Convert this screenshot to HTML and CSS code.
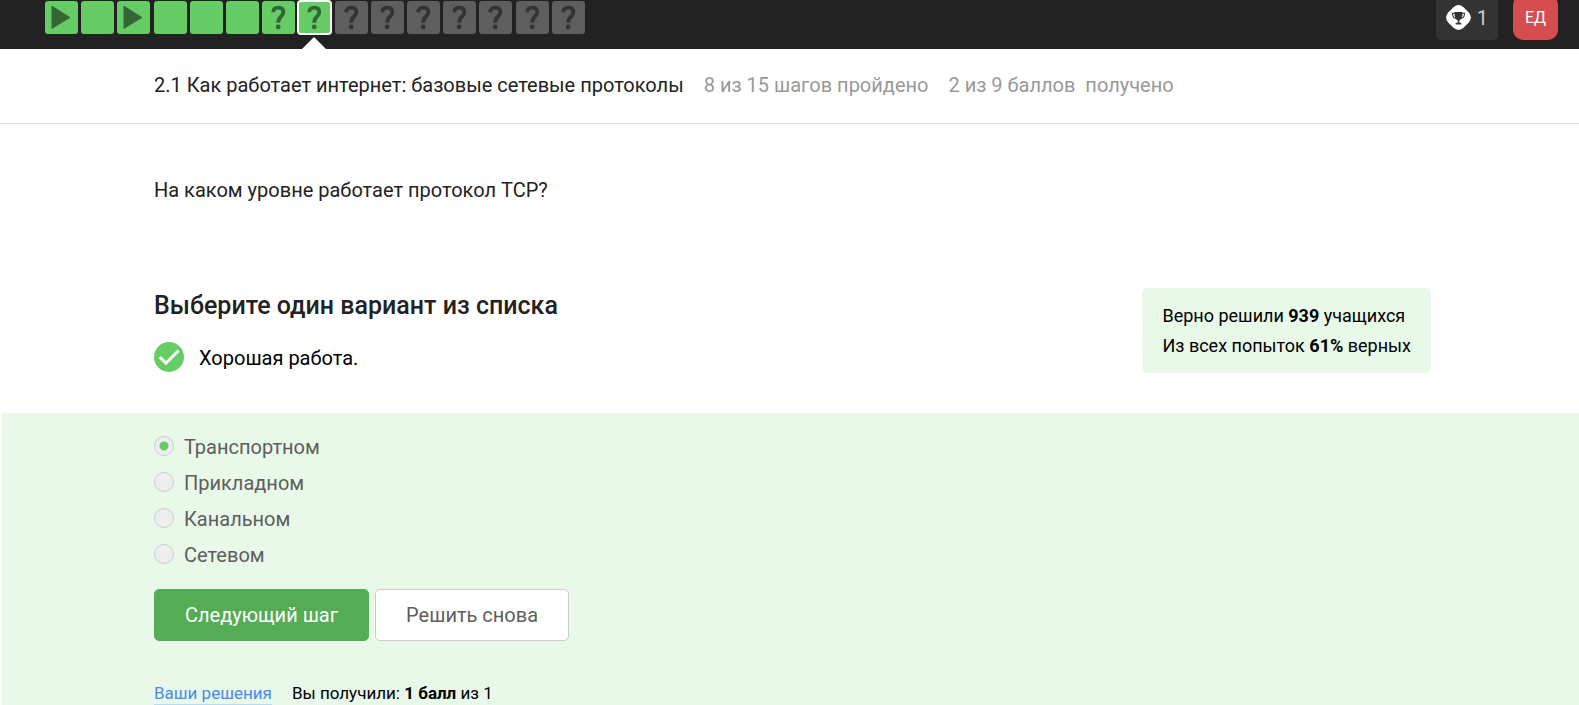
FILE: index.html
```html
<!DOCTYPE html>
<html lang="ru">
<head>
<meta charset="utf-8">
<meta name="viewport" content="width=device-width, initial-scale=1">
<title>Как работает интернет: базовые сетевые протоколы</title>
<link rel="stylesheet" href="styles.css">
</head>
<body>
<svg width="0" height="0" class="sprite" aria-hidden="true">
  <symbol id="play" viewBox="0 0 33 33"><path d="M6.500 5.500Q6.500 4.500 7.500 5L24.500 15.800Q25.500 16.500 24.500 17.200L7.500 27.500Q6.500 28 6.500 27Z"/></symbol>
  <symbol id="question" viewBox="0 0 33 33"><path d="M11.200 11.300C11.200 8.200 13.200 6.600 16.500 6.600C19.800 6.600 21.300 8.200 21.300 11C21.300 13.200 20.500 14.300 18.900 15.700C17 17.400 16.200 18.600 16.200 21.700" fill="none" stroke="currentColor" stroke-width="3.800"/><circle cx="16.200" cy="25.900" r="2.400"/></symbol>
</svg>
<header class="topbar">
  <nav class="steps" aria-label="Шаги урока">
    <a class="step step--done" href="#" aria-label="Шаг 1"><svg><use href="#play"/></svg></a>
    <a class="step step--done" href="#" aria-label="Шаг 2"></a>
    <a class="step step--done" href="#" aria-label="Шаг 3"><svg><use href="#play"/></svg></a>
    <a class="step step--done" href="#" aria-label="Шаг 4"></a>
    <a class="step step--done" href="#" aria-label="Шаг 5"></a>
    <a class="step step--done" href="#" aria-label="Шаг 6"></a>
    <a class="step step--done" href="#" aria-label="Шаг 7"><svg><use href="#question"/></svg></a>
    <a class="step step--done step--active" href="#" aria-label="Шаг 8" aria-current="step"><svg><use href="#question"/></svg></a>
    <a class="step" href="#" aria-label="Шаг 9"><svg><use href="#question"/></svg></a>
    <a class="step" href="#" aria-label="Шаг 10"><svg><use href="#question"/></svg></a>
    <a class="step" href="#" aria-label="Шаг 11"><svg><use href="#question"/></svg></a>
    <a class="step" href="#" aria-label="Шаг 12"><svg><use href="#question"/></svg></a>
    <a class="step" href="#" aria-label="Шаг 13"><svg><use href="#question"/></svg></a>
    <a class="step" href="#" aria-label="Шаг 14"><svg><use href="#question"/></svg></a>
    <a class="step" href="#" aria-label="Шаг 15"><svg><use href="#question"/></svg></a>
  </nav>
  <div class="user">
    <button class="awards" type="button">
      <svg class="awards__icon" viewBox="0 0 25 25" aria-hidden="true">
        <path d="M7.500 2.200Q12.500-2 17.500 2.200L22.800 7.500Q27 12.500 22.800 17.500L17.500 22.800Q12.500 27 7.500 22.800L2.200 17.500Q-2 12.500 2.200 7.500Z" fill="#fff"/>
        <path d="M8.500 7h8c0 5-.8 7.500-3.200 8.300v2.500h2v1.600H9.700v-1.600h2v-2.500C9.300 14.500 8.500 12 8.500 7Z" fill="#333"/>
        <path d="M9 8.200H6.500c0 3 1 4.700 3.300 5.300M16 8.200h2.500c0 3-1 4.700-3.300 5.300" fill="none" stroke="#333" stroke-width="1.100"/>
      </svg>
      <span>1</span>
    </button>
    <button class="avatar" type="button">ЕД</button>
  </div>
</header>

<div class="lesson">
  <h1 class="lesson__title">2.1 Как работает интернет: базовые сетевые протоколы</h1>
  <span>8 из 15 шагов пройдено</span>
  <span>2 из 9 баллов&nbsp; получено</span>
</div>

<main>
  <p class="question">На каком уровне работает протокол TCP?</p>

  <section class="summary">
    <div>
      <h2 class="summary__title">Выберите один вариант из списка</h2>
      <p class="feedback">
        <svg class="feedback__icon" viewBox="0 0 30 30" aria-hidden="true"><circle cx="15" cy="15" r="15" fill="#66cc66"/><path d="M5.800 15.200L12 21.200L24.500 8.500" fill="none" stroke="#fff" stroke-width="3"/></svg>
        Хорошая работа.
      </p>
    </div>
    <aside class="stats">
      <p>Верно решили <b>939</b> учащихся</p>
      <p>Из всех попыток <b>61%</b> верных</p>
    </aside>
  </section>

  <form class="quiz">
    <label class="option"><input type="radio" name="answer" checked>Транспортном</label>
    <label class="option"><input type="radio" name="answer">Прикладном</label>
    <label class="option"><input type="radio" name="answer">Канальном</label>
    <label class="option"><input type="radio" name="answer">Сетевом</label>
    <div class="actions">
      <button class="button button--primary" type="button">Следующий шаг</button>
      <button class="button" type="button">Решить снова</button>
    </div>
    <div class="result">
      <a class="result__link" href="#">Ваши решения</a>
      <span>Вы получили: <b>1 балл</b> из 1</span>
    </div>
  </form>
</main>
</body>
</html>
```
FILE: styles.css
```css
* {
  box-sizing: border-box;
}

body {
  margin: 0;
  background: #fff;
  color: #222;
  font: 20px/30px Roboto, "Open Sans", sans-serif;
  overflow: hidden;
}

h1, h2, p {
  margin: 0;
}

button {
  border: 0;
  font: inherit;
  cursor: pointer;
}

.sprite {
  position: absolute;
}

.topbar {
  display: flex;
  justify-content: space-between;
  align-items: flex-start;
  height: 49px;
  padding: 0 21px 0 45px;
  background: #222;
}

.steps {
  display: flex;
  justify-content: space-between;
  width: 540px;
  padding-top: 1px;
}

.step {
  position: relative;
  width: 33px;
  height: 33px;
  border-radius: 3px;
  background: #5e5e5e;
  color: #333;
}

.step svg {
  display: block;
  width: 33px;
  height: 33px;
  fill: currentColor;
}

.step--done {
  background: #66cc66;
  color: #336633;
}

.step--active {
  box-shadow: 0 0 0 1px #fff, inset 0 0 0 1px #fff;
}

.step--active::after {
  content: "";
  position: absolute;
  top: 36px;
  left: 4px;
  border: 12px solid transparent;
  border-top: 0;
  border-bottom-color: #fff;
}

.user {
  display: flex;
  gap: 15px;
  margin-top: -5px;
}

.awards {
  display: flex;
  align-items: center;
  gap: 6px;
  height: 45px;
  padding: 0 10px;
  border-radius: 5px;
  background: #333;
  color: #ccc;
}

.awards__icon {
  width: 25px;
  height: 25px;
}

.avatar {
  width: 45px;
  height: 45px;
  padding: 0;
  border-radius: 10px;
  background: #d64d50;
  color: #fff;
  font-size: 16px;
}

.lesson {
  display: flex;
  align-items: center;
  gap: 20px;
  padding: 21px 148px 23px 154px;
  border-bottom: 1px solid #ddd;
  color: #999;
}

.lesson__title {
  color: #222;
  font-size: 20px;
  font-weight: 400;
}

.question {
  padding: 51px 148px 83px 154px;
}

.summary {
  display: flex;
  justify-content: space-between;
  align-items: flex-start;
  padding: 0 148px 39px 154px;
}

.summary__title {
  padding-top: 3px;
  font-size: 25px;
  font-weight: 500;
}

.feedback {
  display: flex;
  align-items: flex-start;
  gap: 15px;
  margin-top: 21px;
  color: #000;
  line-height: 32px;
}

.feedback__icon {
  width: 30px;
  height: 30px;
}

.stats {
  padding: 13px 20px 12px;
  border-radius: 5px;
  background: #e8f8e9;
  color: #000;
  font-size: 18px;
}

.quiz {
  margin-left: 2px;
  padding: 18px 148px 20px 152px;
  background: #e8f8e9;
}

.option {
  display: flex;
  align-items: flex-start;
  gap: 10px;
  width: fit-content;
  margin-bottom: 4px;
  color: #5e5e5e;
  line-height: 32px;
}

.option input {
  appearance: none;
  width: 20px;
  height: 20px;
  margin: 5px 0 0;
  border: 1px solid #ccc;
  border-radius: 50%;
  background: #eee;
}

.option input:checked {
  background: radial-gradient(circle, #66cc66 4px, #eee 5px);
}

.actions {
  display: flex;
  gap: 6px;
  padding-top: 14px;
}

.button {
  height: 52px;
  padding: 0 30px;
  border: 1px solid #ccc;
  border-radius: 5px;
  background: #fff;
  color: #5e5e5e;
}

.button--primary {
  border-color: #54ad54;
  background: #54ad54;
  color: #fff;
}

.result {
  display: flex;
  align-items: center;
  gap: 20px;
  margin-top: 37px;
  color: #000;
  font-size: 17px;
}

.result__link {
  border-bottom: 1px solid #b3dcf5;
  color: #4a8af0;
  line-height: 22px;
  text-decoration: none;
}
```
